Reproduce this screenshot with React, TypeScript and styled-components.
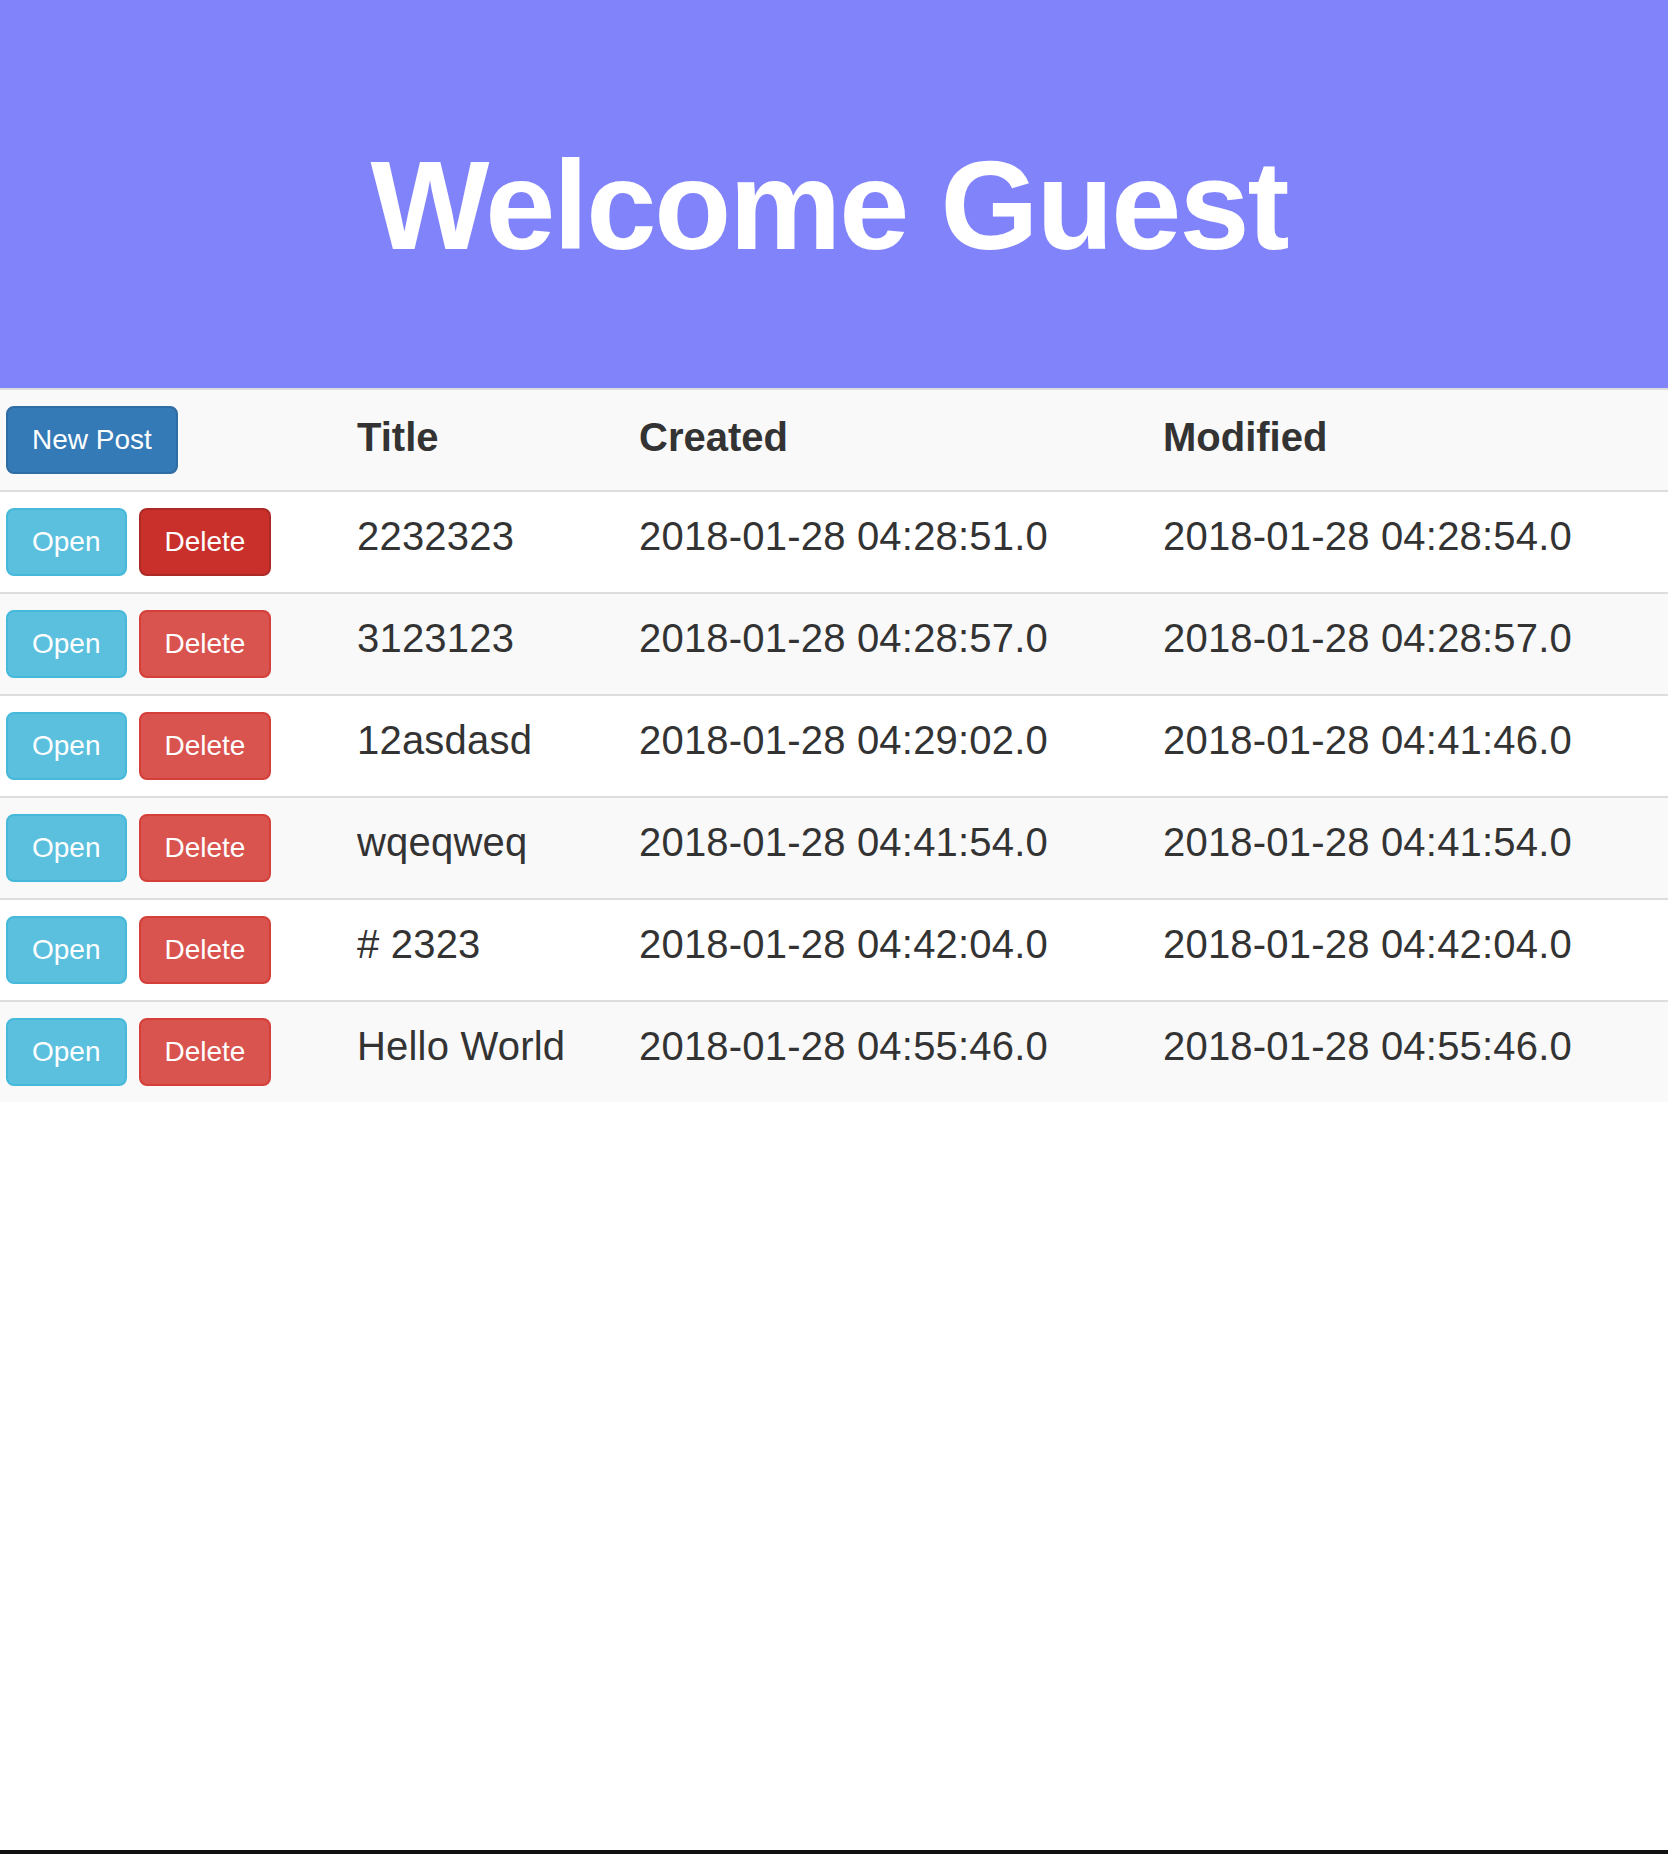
import React from "react";
import styled, { createGlobalStyle, css } from "styled-components";

const GlobalStyle = createGlobalStyle`
  html, body {
    margin: 0;
    padding: 0;
    background: #ffffff;
  }
  body {
    font-family: "Liberation Sans", Arial, Helvetica, sans-serif;
    color: #333333;
  }
  * { box-sizing: border-box; }
`;

const Page = styled.div`
  min-height: 1854px;
  display: flex;
  flex-direction: column;
`;

const Hero = styled.header`
  height: 388px;
  padding: 137px 10px 0 0;
  background: #8183fb;
  text-align: center;
`;

const HeroTitle = styled.h1`
  margin: 0;
  font-size: 126px;
  line-height: 1.1;
  font-weight: 700;
  letter-spacing: -2px;
  color: #ffffff;
`;

const Table = styled.table`
  width: 100%;
  table-layout: fixed;
  border-collapse: collapse;
  border-spacing: 0;
  font-size: 40px;
  line-height: 1.42857;
  color: #333333;
`;

const Col = styled.col<{ $w?: number }>`
  ${(p) => (p.$w ? css`width: ${p.$w}px;` : "")}
`;

const Row = styled.tr<{ $striped: boolean }>`
  background: ${(p) => (p.$striped ? "#f9f9f9" : "#ffffff")};
`;

const cellBase = css`
  padding: 16px 6px;
  border-top: 2px solid #dddddd;
  vertical-align: top;
  text-align: left;
  white-space: nowrap;
`;

const HeadCell = styled.th`
  ${cellBase};
  font-weight: 700;
`;

const HeadLabel = styled.span`
  display: block;
  padding-top: 3px;
`;

const Cell = styled.td`
  ${cellBase};
  font-weight: 400;
  letter-spacing: 0.2px;
`;

const Actions = styled.div`
  display: flex;
  align-items: center;
  gap: 12px;
  letter-spacing: 0;
`;

type Variant = "primary" | "info" | "danger" | "dangerActive";

const variants: Record<Variant, { bg: string; border: string }> = {
  primary: { bg: "#337ab7", border: "#2e6da4" },
  info: { bg: "#5bc0de", border: "#46b8da" },
  danger: { bg: "#d9534f", border: "#d43f3a" },
  dangerActive: { bg: "#c9302c", border: "#ac2925" },
};

const Button = styled.button<{ $variant: Variant }>`
  display: inline-block;
  margin: 0;
  padding: 12px 24px;
  font-family: inherit;
  font-size: 28px;
  line-height: 40px;
  font-weight: 400;
  letter-spacing: 0;
  color: #ffffff;
  background: ${(p) => variants[p.$variant].bg};
  border: 2px solid ${(p) => variants[p.$variant].border};
  border-radius: 8px;
  white-space: nowrap;
  cursor: pointer;
`;

const Spacer = styled.div`
  flex: 1;
`;

const BottomBar = styled.div`
  height: 4px;
  background: #111111;
`;

const posts = [
  { title: "2232323", created: "2018-01-28 04:28:51.0", modified: "2018-01-28 04:28:54.0" },
  { title: "3123123", created: "2018-01-28 04:28:57.0", modified: "2018-01-28 04:28:57.0" },
  { title: "12asdasd", created: "2018-01-28 04:29:02.0", modified: "2018-01-28 04:41:46.0" },
  { title: "wqeqweq", created: "2018-01-28 04:41:54.0", modified: "2018-01-28 04:41:54.0" },
  { title: "# 2323", created: "2018-01-28 04:42:04.0", modified: "2018-01-28 04:42:04.0" },
  { title: "Hello World", created: "2018-01-28 04:55:46.0", modified: "2018-01-28 04:55:46.0" },
];

export default function App() {
  return (
    <Page>
      <GlobalStyle />
      <Hero>
        <HeroTitle>Welcome Guest</HeroTitle>
      </Hero>
      <Table>
        <colgroup>
          <Col $w={351} />
          <Col $w={282} />
          <Col $w={524} />
          <Col />
        </colgroup>
        <tbody>
          <Row $striped>
            <HeadCell>
              <Actions>
                <Button $variant="primary">New Post</Button>
              </Actions>
            </HeadCell>
            <HeadCell>
              <HeadLabel>Title</HeadLabel>
            </HeadCell>
            <HeadCell>
              <HeadLabel>Created</HeadLabel>
            </HeadCell>
            <HeadCell>
              <HeadLabel>Modified</HeadLabel>
            </HeadCell>
          </Row>
          {posts.map((p, i) => (
            <Row key={p.title} $striped={i % 2 === 1}>
              <Cell>
                <Actions>
                  <Button $variant="info">Open</Button>
                  <Button $variant={i === 0 ? "dangerActive" : "danger"}>Delete</Button>
                </Actions>
              </Cell>
              <Cell>{p.title}</Cell>
              <Cell>{p.created}</Cell>
              <Cell>{p.modified}</Cell>
            </Row>
          ))}
        </tbody>
      </Table>
      <Spacer />
      <BottomBar />
    </Page>
  );
}
